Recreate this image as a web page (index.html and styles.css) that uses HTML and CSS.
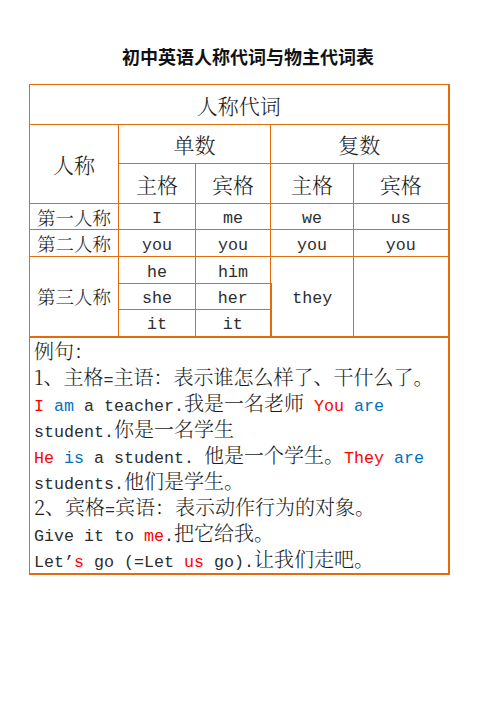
FILE: index.html
```html
<!DOCTYPE html>
<html lang="zh">
<head>
<meta charset="utf-8">
<title>初中英语人称代词与物主代词表</title>
<link rel="stylesheet" href="styles.css">
</head>
<body>
<h1 class="title">初中英语人称代词与物主代词表</h1>
<table class="grid">
  <colgroup>
    <col class="c1"><col class="c2"><col class="c3"><col class="c4"><col class="c5">
  </colgroup>
  <tr class="r-head">
    <td colspan="5" class="big">人称代词</td>
  </tr>
  <tr class="r-num">
    <td rowspan="2" class="big">人称</td>
    <td colspan="2" class="big">单数</td>
    <td colspan="2" class="big">复数</td>
  </tr>
  <tr class="r-case">
    <td class="big">主格</td>
    <td class="big">宾格</td>
    <td class="big">主格</td>
    <td class="big">宾格</td>
  </tr>
  <tr class="r-a">
    <td class="lab">第一人称</td>
    <td><span class="en">I</span></td>
    <td><span class="en">me</span></td>
    <td><span class="en">we</span></td>
    <td><span class="en">us</span></td>
  </tr>
  <tr class="r-b">
    <td class="lab">第二人称</td>
    <td><span class="en">you</span></td>
    <td><span class="en">you</span></td>
    <td><span class="en">you</span></td>
    <td><span class="en">you</span></td>
  </tr>
  <tr class="r-c">
    <td rowspan="3" class="lab last">第三人称</td>
    <td><span class="en">he</span></td>
    <td><span class="en">him</span></td>
    <td rowspan="3" class="last"><span class="en">they</span></td>
    <td rowspan="3" class="last"></td>
  </tr>
  <tr class="r-d">
    <td><span class="en">she</span></td>
    <td><span class="en">her</span></td>
  </tr>
  <tr class="r-e">
    <td class="last"><span class="en">it</span></td>
    <td class="last"><span class="en">it</span></td>
  </tr>
  <tr class="r-ex">
    <td colspan="5" class="example">
      <p>例句：</p>
      <p>1、主格<span class="en">=</span>主语：表示谁怎么样了、干什么了。</p>
      <p><span class="en"><span class="red">I</span> <span class="blue">am</span> a teacher.</span>我是一名老师<span class="en"> <span class="red">You</span> <span class="blue">are</span> student.</span>你是一名学生</p>
      <p><span class="en"><span class="red">He</span> <span class="blue">is</span> a student. </span>他是一个学生。<span class="en"><span class="red">They</span> <span class="blue">are</span> students.</span>他们是学生。</p>
      <p>2、宾格<span class="en">=</span>宾语：表示动作行为的对象。</p>
      <p><span class="en">Give it to <span class="red">me</span>.</span>把它给我。</p>
      <p><span class="en">Let’<span class="red">s</span> go (=Let <span class="red">us</span> go).</span>让我们走吧。</p>
    </td>
  </tr>
</table>
</body>
</html>
```
FILE: styles.css
```css
html, body {
  margin: 0;
  padding: 0;
  background: #ffffff;
}
body {
  font-family: "Noto Serif CJK SC", "Noto Sans CJK SC", serif;
  color: #1c1c1c;
  width: 496px;
}
.title {
  margin: 44px 0 0 0;
  font-family: "Noto Sans CJK SC", sans-serif;
  font-size: 18px;
  line-height: 24px;
  font-weight: 700;
  text-align: center;
  color: #111111;
}
.grid {
  margin: 16px 0 0 29px;
  width: 419px;
  border-collapse: collapse;
  table-layout: fixed;
}
.c1 { width: 89px; }
.c2 { width: 77px; }
.c3 { width: 75px; }
.c4 { width: 83px; }
.c5 { width: 95px; }
.grid td {
  border: 1px solid #e36c0a;
  padding: 0;
  text-align: center;
  vertical-align: middle;
  font-size: 18.5px;
  font-weight: 300;
  line-height: 20px;
}
.grid tr td:last-child { border-right-width: 2px; }
.grid td.big { font-size: 21px; }
.grid td.last { border-bottom-width: 2px; }
.r-head { height: 40px; }
.r-num { height: 39px; }
.r-case { height: 40px; }
.r-a { height: 26px; }
.r-b { height: 27px; }
.r-c { height: 27px; }
.r-d { height: 26px; }
.r-e { height: 27px; }
.en {
  font-family: "Liberation Mono", "DejaVu Sans Mono", monospace;
  font-size: 16.667px;
  font-weight: 400;
  line-height: 1;
  color: #2e2e2e;
}
.grid td.example {
  text-align: left;
  vertical-align: top;
  padding: 0 3px 0 4px;
  font-size: 20px;
  line-height: 26px;
  border-bottom-width: 2px;
  height: 235px;
}
.example p {
  margin: 0;
}
.en .red, .red { color: #ff0000; }
.en .blue, .blue { color: #0070c0; }
```
